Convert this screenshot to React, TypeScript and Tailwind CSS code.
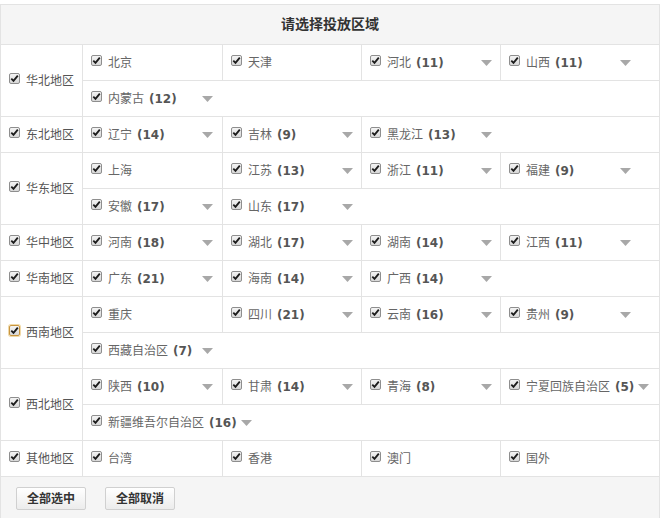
import React from 'react';

type Province = { name: string; count?: number };
type Region = { name: string; focused?: boolean; provinces: Province[] };

const regions: Region[] = [
  {
    name: '华北地区',
    provinces: [
      { name: '北京' },
      { name: '天津' },
      { name: '河北', count: 11 },
      { name: '山西', count: 11 },
      { name: '内蒙古', count: 12 },
    ],
  },
  {
    name: '东北地区',
    provinces: [
      { name: '辽宁', count: 14 },
      { name: '吉林', count: 9 },
      { name: '黑龙江', count: 13 },
    ],
  },
  {
    name: '华东地区',
    provinces: [
      { name: '上海' },
      { name: '江苏', count: 13 },
      { name: '浙江', count: 11 },
      { name: '福建', count: 9 },
      { name: '安徽', count: 17 },
      { name: '山东', count: 17 },
    ],
  },
  {
    name: '华中地区',
    provinces: [
      { name: '河南', count: 18 },
      { name: '湖北', count: 17 },
      { name: '湖南', count: 14 },
      { name: '江西', count: 11 },
    ],
  },
  {
    name: '华南地区',
    provinces: [
      { name: '广东', count: 21 },
      { name: '海南', count: 14 },
      { name: '广西', count: 14 },
    ],
  },
  {
    name: '西南地区',
    focused: true,
    provinces: [
      { name: '重庆' },
      { name: '四川', count: 21 },
      { name: '云南', count: 16 },
      { name: '贵州', count: 9 },
      { name: '西藏自治区', count: 7 },
    ],
  },
  {
    name: '西北地区',
    provinces: [
      { name: '陕西', count: 10 },
      { name: '甘肃', count: 14 },
      { name: '青海', count: 8 },
      { name: '宁夏回族自治区', count: 5 },
      { name: '新疆维吾尔自治区', count: 16 },
    ],
  },
  {
    name: '其他地区',
    provinces: [{ name: '台湾' }, { name: '香港' }, { name: '澳门' }, { name: '国外' }],
  },
];

// widths of the first three columns, the fourth takes the rest
const colWidths = ['w-[140px]', 'w-[139px]', 'w-[139px]'];

function CheckBox({ focused }: { focused?: boolean }) {
  return (
    <span
      className={`relative -top-[2px] inline-flex h-[11px] w-[11px] shrink-0 items-center justify-center rounded-[2px] border bg-gradient-to-b from-[#f4f4f4] to-[#d8d8d8] ${
        focused ? 'border-[#c9953e] shadow-[0_0_0_1px_#f0d9a8]' : 'border-[#8e8e8e]'
      }`}
    >
      <svg width="9" height="9" viewBox="0 0 9 9">
        <path d="M1.3 4.6 L3.5 6.9 L7.8 1.6" fill="none" stroke="#1c1c1c" strokeWidth="1.8" />
      </svg>
    </span>
  );
}

function Caret() {
  return (
    <svg width="11" height="6" viewBox="0 0 11 6" className="ml-1 shrink-0">
      <path d="M0 0 H11 L5.5 6 Z" fill="#a8a8a8" />
    </svg>
  );
}

function ProvinceCell({ p, index, last }: { p: Province; index: number; last: boolean }) {
  const width = last ? 'flex-1' : `${colWidths[index]} border-r border-[#e3e3e3]`;
  return (
    <div className={`flex h-full items-center pl-2 ${width}`}>
      <span className="flex min-w-[107px] items-center">
        <CheckBox />
        <span className="ml-[6px] whitespace-nowrap text-[#666]">
          {p.name}
          {p.count !== undefined && <b className="ml-[5px] text-[#555]">({p.count})</b>}
        </span>
      </span>
      {p.count !== undefined && <Caret />}
    </div>
  );
}

function RegionRow({ region }: { region: Region }) {
  const rows: Province[][] = [];
  for (let i = 0; i < region.provinces.length; i += 4) rows.push(region.provinces.slice(i, i + 4));

  return (
    <div className="flex border-b border-[#e3e3e3]">
      <div className="flex w-[82px] shrink-0 items-center border-r border-[#e3e3e3] pl-2">
        <CheckBox focused={region.focused} />
        <span className="ml-[6px] text-[#555]">{region.name}</span>
      </div>
      <div className="flex flex-1 flex-col">
        {rows.map((row, r) => (
          <div key={r} className={`flex h-[35px] ${r > 0 ? 'box-content border-t border-[#e3e3e3]' : ''}`}>
            {row.map((p, i) => (
              <ProvinceCell key={p.name} p={p} index={i} last={i === row.length - 1} />
            ))}
          </div>
        ))}
      </div>
    </div>
  );
}

export default function App() {
  return (
    <div className="min-h-[518px] bg-white pt-1 font-['DejaVu_Sans','Noto_Sans_CJK_SC',sans-serif] text-[12px]">
      <div className="w-[660px] border-x border-t border-[#e3e3e3]">
        <div className="flex h-10 items-center justify-center border-b border-[#e3e3e3] bg-[#f5f5f5]">
          <span className="text-[14px] font-bold text-[#333]">请选择投放区域</span>
        </div>
        {regions.map((region) => (
          <RegionRow key={region.name} region={region} />
        ))}
        <div className="flex h-[60px] gap-[19px] bg-[#f5f5f5] pl-[15px] pt-[10px]">
          <button className="h-[23px] w-[70px] rounded-[2px] border border-[#d0d0d0] bg-gradient-to-b from-white to-[#ececec] text-[12px] font-bold text-[#333]">
            全部选中
          </button>
          <button className="h-[23px] w-[70px] rounded-[2px] border border-[#d0d0d0] bg-gradient-to-b from-white to-[#ececec] text-[12px] font-bold text-[#333]">
            全部取消
          </button>
        </div>
      </div>
    </div>
  );
}
